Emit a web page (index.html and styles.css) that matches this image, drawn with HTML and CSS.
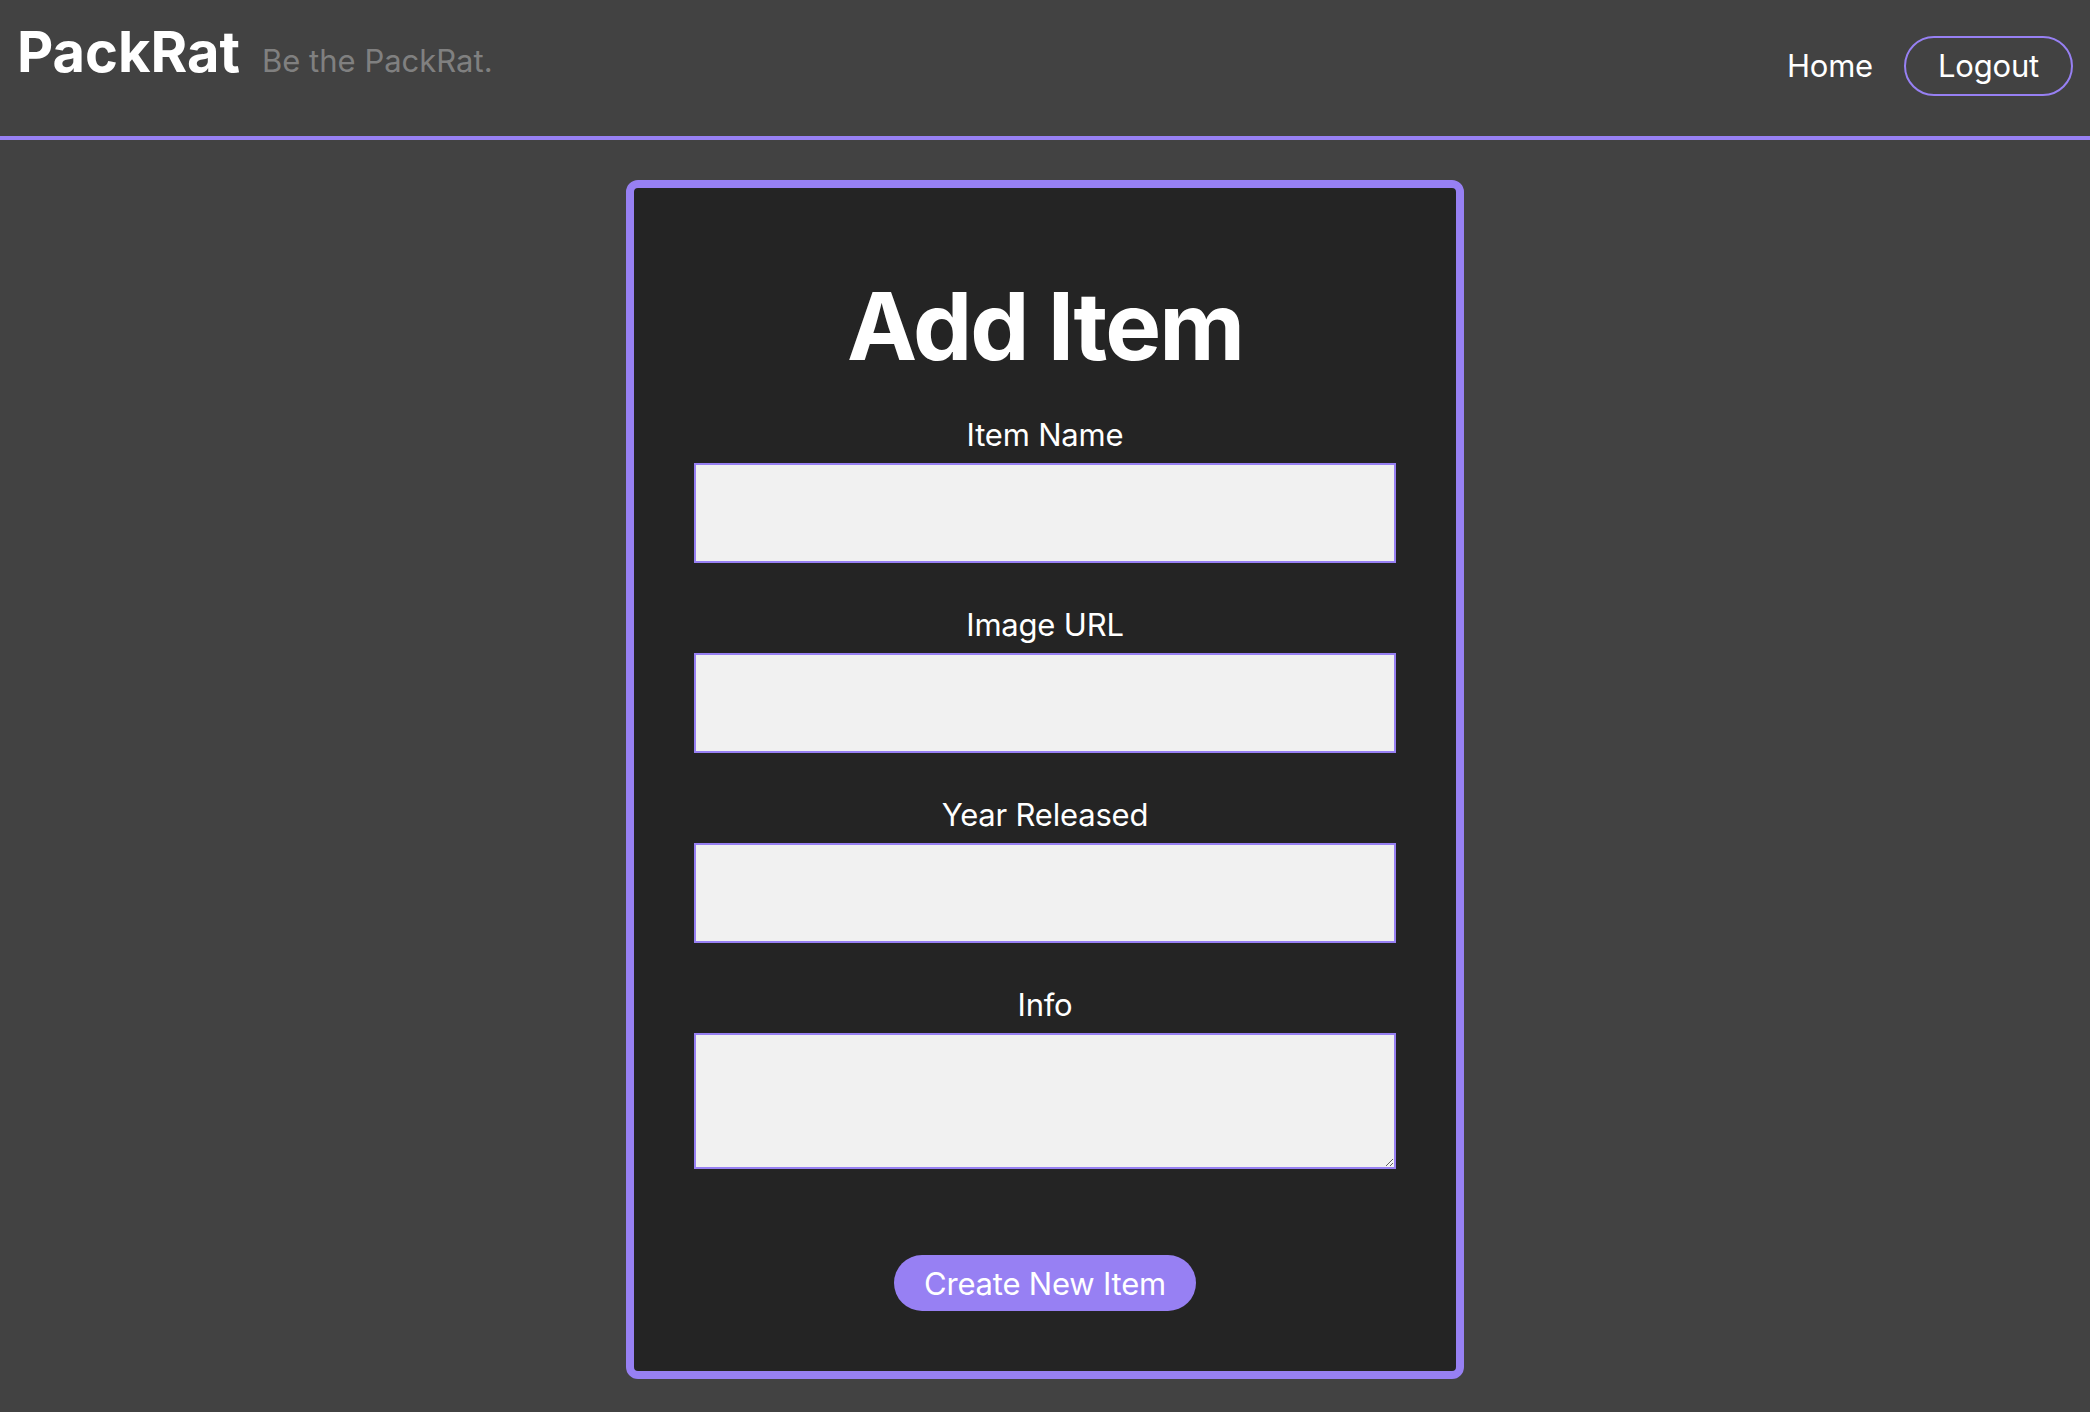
FILE: index.html
```html
<!DOCTYPE html>
<html lang="en">
<head>
<meta charset="utf-8">
<title>PackRat - Add Item</title>
<link rel="stylesheet" href="styles.css">
</head>
<body>
<header class="site-header">
  <div class="brand">
    <span class="brand-name">PackRat</span>
    <span class="brand-tagline">Be the PackRat.</span>
  </div>
  <nav class="nav">
    <a class="nav-link" href="#">Home</a>
    <a class="nav-button" href="#">Logout</a>
  </nav>
</header>
<main class="main">
  <form class="card">
    <h1 class="card-title">Add Item</h1>
    <div class="field">
      <label class="field-label" for="name">Item Name</label>
      <input class="field-input" id="name" type="text">
    </div>
    <div class="field">
      <label class="field-label" for="image">Image URL</label>
      <input class="field-input" id="image" type="text">
    </div>
    <div class="field">
      <label class="field-label" for="year">Year Released</label>
      <input class="field-input" id="year" type="text">
    </div>
    <div class="field">
      <label class="field-label" for="info">Info</label>
      <textarea class="field-textarea" id="info"></textarea>
    </div>
    <button class="submit" type="button">Create New Item</button>
  </form>
</main>
</body>
</html>
```
FILE: styles.css
```css
* { box-sizing: border-box; }
html, body {
  margin: 0;
  padding: 0;
  background: #424242;
  font-family: Inter, "Noto Sans", sans-serif;
  color: #ffffff;
}
.site-header {
  height: 140px;
  display: flex;
  justify-content: space-between;
  align-items: flex-start;
  padding: 0 17px 0 17px;
  border-bottom: 4px solid #9780f3;
}
.brand {
  display: flex;
  align-items: baseline;
  gap: 22px;
  margin-top: 24px;
}
.brand-name {
  font-size: 56px;
  line-height: 1;
  font-weight: 700;
}
.brand-tagline {
  font-size: 31px;
  line-height: 1;
  color: #808080;
}
.nav {
  display: flex;
  align-items: baseline;
  gap: 31px;
  margin-top: 36px;
}
.nav-link, .nav-button {
  color: #ffffff;
  text-decoration: none;
  font-size: 31px;
  letter-spacing: -0.2px;
}
.nav-button {
  display: inline-block;
  height: 60px;
  line-height: 56px;
  padding: 0 32px;
  border: 2px solid #9780f3;
  border-radius: 30px;
}
.main {
  display: flex;
  justify-content: center;
  padding-top: 40px;
}
.card {
  width: 838px;
  background: #242424;
  border: 8px solid #9780f3;
  border-radius: 12px;
  padding: 91px 60px 60px;
  display: flex;
  flex-direction: column;
  align-items: center;
  gap: 42px;
}
.card-title {
  margin: 0;
  font-size: 94px;
  line-height: 94px;
  font-weight: 700;
  letter-spacing: -2px;
}
.field {
  width: 100%;
  display: flex;
  flex-direction: column;
  align-items: center;
  gap: 8px;
}
.field-label {
  font-size: 31px;
  line-height: 40px;
  letter-spacing: -0.2px;
}
.field-input, .field-textarea {
  display: block;
  width: 100%;
  margin: 0;
  background: #f1f1f1;
  border: 2px solid #9780f3;
  border-radius: 0;
  font-family: inherit;
  font-size: 31px;
}
.field-input { height: 100px; }
.field-textarea { height: 136px; resize: both; }
.submit {
  margin-top: 44px;
  width: 302px;
  height: 56px;
  border: none;
  border-radius: 28px;
  background: #9780f3;
  color: #ffffff;
  font-family: inherit;
  font-size: 31px;
  letter-spacing: -0.2px;
  padding: 0;
}
```
